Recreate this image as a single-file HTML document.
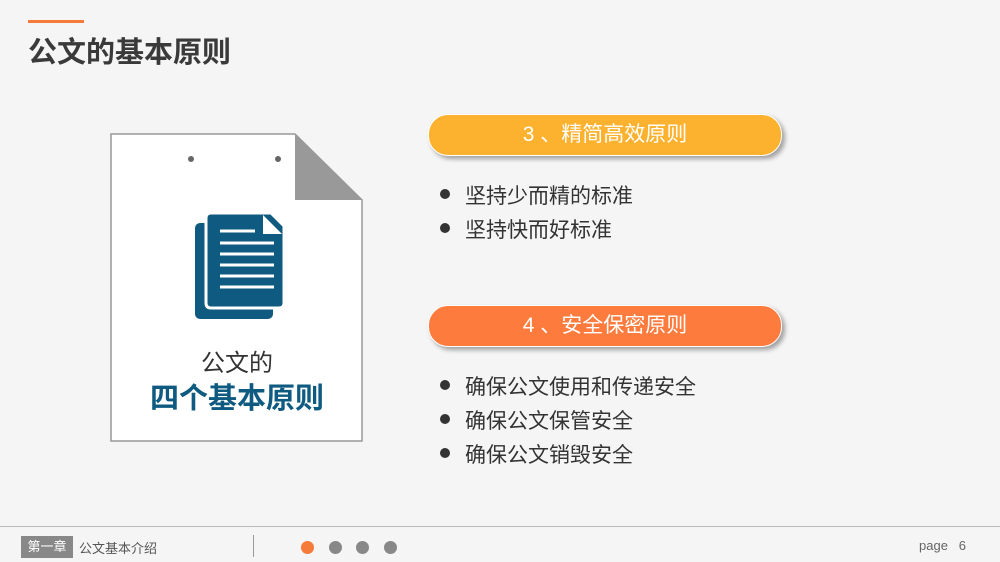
<!DOCTYPE html><html><head><meta charset="utf-8"><style>
body{margin:0;width:1000px;height:562px;background:#f5f5f5;position:relative;overflow:hidden;font-family:"Liberation Sans","Noto Sans CJK SC",sans-serif}
.a{position:absolute}
.pill{position:absolute;left:428px;width:352px;height:40px;border-radius:20px;border:1px solid #fff;box-shadow:3px 3px 5px rgba(0,0,0,.35);color:#fff;font-size:21px;text-align:center;line-height:40px}
.li{position:absolute;left:440px;font-size:21px;color:#333}
.li:before{content:"";position:absolute;left:0;top:9px;width:10px;height:10px;border-radius:50%;background:#333}
.li span{margin-left:25px}
.dot{position:absolute;top:541px;width:13px;height:13px;border-radius:50%;background:#888}
</style></head><body>
<div class="a" style="left:28px;top:20px;width:56px;height:3px;background:#f47b3a"></div>
<div class="a" style="left:28px;top:29px;font-size:29px;font-weight:bold;color:#3a3a3a">公文的基本原则</div>
<svg class="a" style="left:110px;top:133px" width="254" height="309">
<path d="M1 1H185L252 67V308H1Z" fill="#fff" stroke="#999" stroke-width="1.5"/>
<path d="M185 1L252 67H185Z" fill="#999"/>
<circle cx="81" cy="26" r="3" fill="#666"/><circle cx="168" cy="26" r="3" fill="#666"/>
<rect x="85" y="90" width="78" height="96" rx="5" fill="#0e5a80"/>
<path d="M101 80H161L174 93V170Q174 175 169 175H101Q96 175 96 170V85Q96 80 101 80Z" fill="#0e5a80" stroke="#fff" stroke-width="3"/>
<path d="M153 82L172 101H153Z" fill="#fff"/>
<g stroke="#fff" stroke-width="3"><line x1="110" y1="98" x2="145" y2="98"/><line x1="110" y1="110" x2="164" y2="110"/><line x1="110" y1="121" x2="164" y2="121"/><line x1="110" y1="132" x2="164" y2="132"/><line x1="110" y1="143" x2="164" y2="143"/><line x1="110" y1="154" x2="164" y2="154"/></g>
</svg>
<div class="a" style="left:111px;width:252px;top:343px;text-align:center;font-size:24px;color:#333">公文的</div>
<div class="a" style="left:111px;width:252px;top:375px;text-align:center;font-size:29px;font-weight:bold;color:#0e5a80">四个基本原则</div>
<div class="pill" style="top:114px;background:#fdb22f">3 、精简高效原则</div>
<div class="li" style="top:180px"><span>坚持少而精的标准</span></div>
<div class="li" style="top:214px"><span>坚持快而好标准</span></div>
<div class="pill" style="top:305px;background:#fe7b3e">4 、安全保密原则</div>
<div class="li" style="top:371px"><span>确保公文使用和传递安全</span></div>
<div class="li" style="top:405px"><span>确保公文保管安全</span></div>
<div class="li" style="top:439px"><span>确保公文销毁安全</span></div>
<div class="a" style="left:0;top:526px;width:1000px;height:1px;background:#bbb"></div>
<div class="a" style="left:21px;top:536px;width:52px;height:22px;background:#888;color:#fff;font-size:13px;line-height:22px;text-align:center">第一章</div>
<div class="a" style="left:79px;top:538px;font-size:13px;color:#555">公文基本介绍</div>
<div class="a" style="left:253px;top:535px;width:1px;height:22px;background:#999"></div>
<div class="dot" style="left:301px;background:#f47b3a"></div><div class="dot" style="left:329px"></div><div class="dot" style="left:356px"></div><div class="dot" style="left:384px"></div>
<div class="a" style="left:919px;top:538px;font-size:13px;color:#666">page&nbsp;&nbsp;&nbsp;6</div>
</body></html>
